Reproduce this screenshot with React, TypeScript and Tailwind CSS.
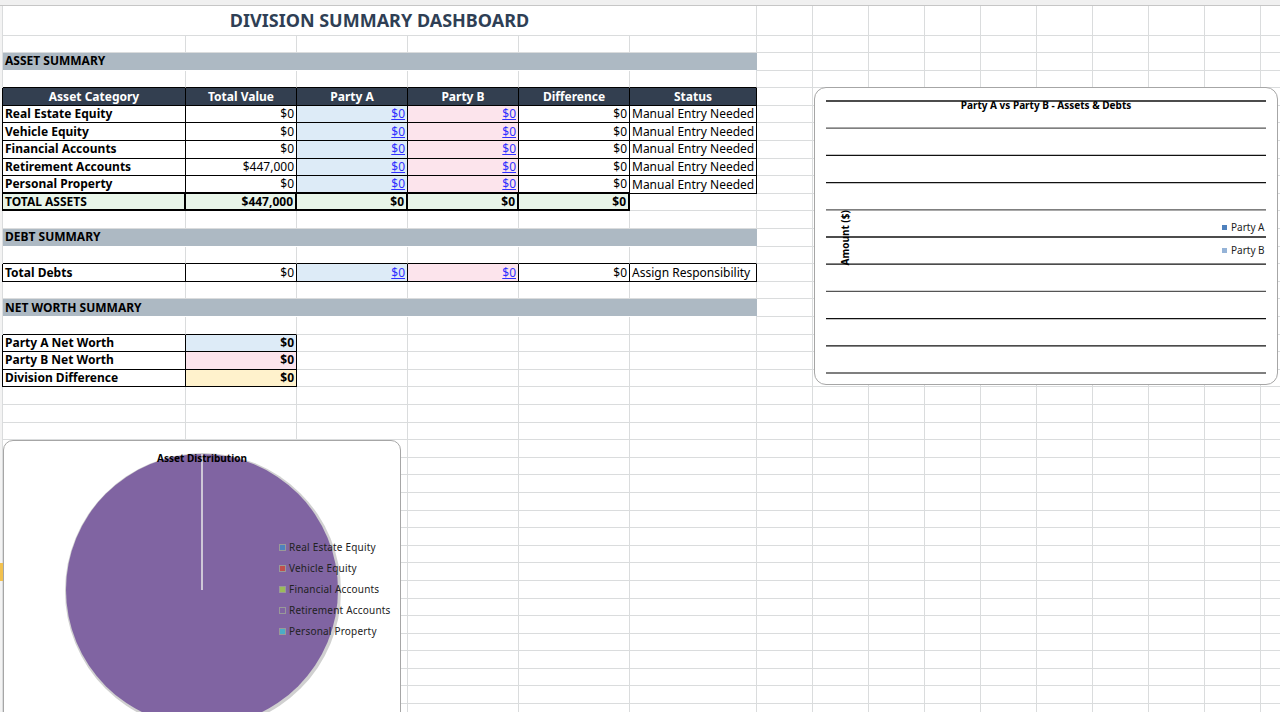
import clsx from "clsx";

type C = { w: string; t?: string; cls?: string };

const G = "border-[#dadcdd]";
const FONT = "font-['Lato','Liberation_Sans',sans-serif]";

const RIGHT_COLS = ["G", "H", "I", "J", "K", "L", "M", "N", "O"];

function Row({ cells, h = "h-[17.6px]", gut = "" }: { cells: C[]; h?: string; gut?: string }) {
    return (
        <div className={clsx("flex", h)}>
            <div className={clsx("w-[3px] shrink-0 border-r bg-[#f3f3f3]", gut || G)} />
            {cells.map((c, i) => (
                <div
                    key={i}
                    className={clsx(
                        "shrink-0 h-full border-r border-b overflow-hidden whitespace-nowrap flex items-center px-[2px] text-[12px] leading-none",
                        G,
                        c.w,
                        c.cls
                    )}
                >
                    {c.t}
                </div>
            ))}
            {RIGHT_COLS.map((k) => (
                <div key={k} className={clsx("w-[56px] shrink-0 h-full border-r border-b", G)} />
            ))}
            <div className={clsx("flex-1 h-full border-b", G)} />
        </div>
    );
}

const W = ["w-[183px]", "w-[111px]", "w-[111px]", "w-[111px]", "w-[111px]", "w-[127px]"];

const blank = (extra: string[] = []): C[] => W.map((w, i) => ({ w, cls: extra[i] }));
const band = (t: string): C[] => [
    { w: "w-[754px]", t, cls: "bg-[#adb9c3] font-bold text-[12.5px] text-black border-r-[#adb9c3] border-b-white" },
];

const K = "border-black";
const lab = "font-bold text-black";
const num = "justify-end text-black";
const pa = "justify-end bg-[#ddebf7] text-[#3030ff] underline";
const pb = "justify-end bg-[#fce4ec] text-[#3030ff] underline";
const stat = "text-black text-[11.5px]";

const assets: [string, string][] = [
    ["Real Estate Equity", "$0"],
    ["Vehicle Equity", "$0"],
    ["Financial Accounts", "$0"],
    ["Retirement Accounts", "$447,000"],
    ["Personal Property", "$0"],
];

function BarChart() {
    const lines = Array.from({ length: 11 }, (_, i) => 13 + i * 27.2);
    return (
        <div className="absolute left-[814px] top-[87px] w-[464px] h-[298px] rounded-[12px] border border-[#a6a6a6] bg-white">
            <svg className="absolute inset-0" width="464" height="298">
                {lines.map((y, i) => (
                    <line key={i} x1="11" x2="451" y1={y} y2={y} stroke={i % 3 === 1 ? "#555" : "#111"} strokeWidth="1.3" />
                ))}
            </svg>
            <div className="absolute left-0 right-0 top-[10px] text-center text-[10px] font-bold text-black">
                Party A vs Party B - Assets &amp; Debts
            </div>
            <div className="absolute left-[2px] top-[142px] w-[56px] -rotate-90 text-[10px] font-bold text-black whitespace-nowrap">
                Amount ($)
            </div>
            <div className="absolute left-[407px] top-[132px] flex flex-col gap-[8px] text-[10px] text-[#222] font-['Liberation_Sans',sans-serif]">
                <div className="flex items-center gap-[4px]"><span className="w-[5px] h-[5px] bg-[#4f81bd]" />Party A</div>
                <div className="flex items-center gap-[4px]"><span className="w-[5px] h-[5px] bg-[#95b3d7]" />Party B</div>
            </div>
        </div>
    );
}

function PieChart() {
    const legend = [
        ["Real Estate Equity", "#4f81bd"],
        ["Vehicle Equity", "#c0504d"],
        ["Financial Accounts", "#9bbb59"],
        ["Retirement Accounts", "#8064a2"],
        ["Personal Property", "#4bacc6"],
    ];
    return (
        <div className="absolute left-[3px] top-[440px] w-[398px] h-[300px] rounded-[10px] border border-[#a6a6a6] bg-white">
            <svg className="absolute inset-0" width="398" height="300">
                <circle cx="199" cy="150" r="138" fill="#d0d0d0" />
                <circle cx="198" cy="149" r="136" fill="#8064a2" />
                <line x1="198" y1="149" x2="198" y2="13" stroke="#e8e8e8" strokeWidth="1.5" />
            </svg>
            <div className="absolute left-0 right-0 top-[10px] text-center text-[10px] font-bold text-black">
                Asset Distribution
            </div>
            <div className="absolute left-[275px] top-[100px] flex flex-col gap-[8px] text-[10px] text-[#222] tracking-[0.2px] font-['Liberation_Sans',sans-serif]">
                {legend.map(([t, c]) => (
                    <div key={t} className="flex items-center gap-[3px] h-[13px]">
                        <span className="w-[7px] h-[7px] border border-[#999]" style={{ background: c }} />
                        {t}
                    </div>
                ))}
            </div>
        </div>
    );
}

export default function App() {
    const tail = Array.from({ length: 20 });
    return (
        <div className={clsx("relative w-[1280px] h-[712px] overflow-hidden bg-white", FONT)}>
            <div className="h-[6px] bg-[#f0f0f0] border-b border-[#c6c6c6]" />
            <Row h="h-[29.5px]" cells={[{ w: "w-[754px]", t: "DIVISION SUMMARY DASHBOARD", cls: "justify-center text-[18px] font-bold text-[#2f3f55]" }]} />
            <Row cells={blank()} />
            <Row cells={band("ASSET SUMMARY")} />
            <Row cells={blank(Array(6).fill("border-b-black"))} />
            <Row
                gut={K}
                cells={["Asset Category", "Total Value", "Party A", "Party B", "Difference", "Status"].map((t, i) => ({
                    w: W[i],
                    t,
                    cls: "justify-center bg-[#333f50] text-white font-bold border-black",
                }))}
            />
            {assets.map(([l, v], r) => {
                const last = r === assets.length - 1;
                const b = clsx(K, last && "border-b-2");
                return (
                    <Row
                        key={l}
                        gut={K}
                        cells={[
                            { w: W[0], t: l, cls: clsx(lab, b) },
                            { w: W[1], t: v, cls: clsx(num, b) },
                            { w: W[2], t: "$0", cls: clsx(pa, b) },
                            { w: W[3], t: "$0", cls: clsx(pb, b) },
                            { w: W[4], t: "$0", cls: clsx(num, b) },
                            { w: W[5], t: "Manual Entry Needed", cls: clsx(stat, K) },
                        ]}
                    />
                );
            })}
            <Row
                gut={K}
                cells={[
                    { w: W[0], t: "TOTAL ASSETS", cls: "bg-[#e8f5e9] font-bold text-black border-black border-b-2 border-r-2" },
                    { w: W[1], t: "$447,000", cls: "bg-[#e8f5e9] font-bold justify-end text-black border-black border-b-2 border-r-2" },
                    { w: W[2], t: "$0", cls: "bg-[#e8f5e9] font-bold justify-end text-black border-black border-b-2 border-r-2" },
                    { w: W[3], t: "$0", cls: "bg-[#e8f5e9] font-bold justify-end text-black border-black border-b-2 border-r-2" },
                    { w: W[4], t: "$0", cls: "bg-[#e8f5e9] font-bold justify-end text-black border-black border-b-2 border-r-2" },
                    { w: W[5] },
                ]}
            />
            <Row cells={blank()} />
            <Row cells={band("DEBT SUMMARY")} />
            <Row cells={blank(Array(6).fill("border-b-black"))} />
            <Row
                gut={K}
                cells={[
                    { w: W[0], t: "Total Debts", cls: clsx(lab, K) },
                    { w: W[1], t: "$0", cls: clsx(num, K) },
                    { w: W[2], t: "$0", cls: clsx(pa, K) },
                    { w: W[3], t: "$0", cls: clsx(pb, K) },
                    { w: W[4], t: "$0", cls: clsx(num, K) },
                    { w: W[5], t: "Assign Responsibility", cls: clsx(stat, K) },
                ]}
            />
            <Row cells={blank()} />
            <Row cells={band("NET WORTH SUMMARY")} />
            <Row cells={blank(["border-b-black", "border-b-black"])} />
            {[
                ["Party A Net Worth", "bg-[#ddebf7]"],
                ["Party B Net Worth", "bg-[#fce4ec]"],
                ["Division Difference", "bg-[#fff2cc]"],
            ].map(([l, bg]) => (
                <Row
                    key={l}
                    gut={K}
                    cells={[
                        { w: W[0], t: l, cls: clsx(lab, K) },
                        { w: W[1], t: "$0", cls: clsx("justify-end font-bold text-black", bg, K) },
                        ...W.slice(2).map((w) => ({ w })),
                    ]}
                />
            ))}
            {tail.map((_, i) => (
                <Row key={i} cells={blank()} gut={i === 10 ? "border-[#f2c14e] border-r-[3px]" : ""} />
            ))}
            <BarChart />
            <PieChart />
        </div>
    );
}
